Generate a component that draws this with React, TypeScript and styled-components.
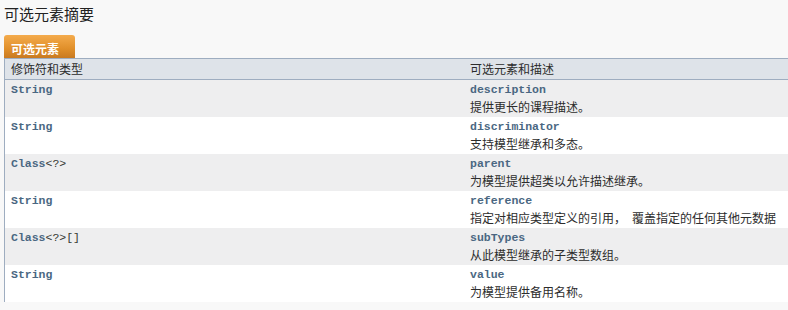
import { Fragment } from "react";
import styled, { createGlobalStyle } from "styled-components";

const GlobalStyle = createGlobalStyle`
  html, body {
    margin: 0;
    padding: 0;
    background: #f8f8f8;
  }
  body {
    font-family: "Noto Sans CJK SC", "DejaVu Sans", sans-serif;
    color: #353833;
    overflow: hidden;
  }
`;

const Page = styled.div`
  width: 788px;
  height: 310px;
  padding: 0 0 0 4px;
  box-sizing: border-box;
`;

const Title = styled.h3`
  margin: 0;
  height: 35px;
  padding-top: 3px;
  box-sizing: border-box;
  font-size: 15px;
  font-weight: normal;
  line-height: 21px;
  color: #222222;
`;

const Tab = styled.div`
  width: 71px;
  height: 23px;
  box-sizing: border-box;
  padding: 5px 0 0 7px;
  border-radius: 3px 3px 0 0;
  background: linear-gradient(#f4ab4c, #e08f2a 60%, #c97a21);
  color: #ffffff;
  font-size: 12px;
  font-weight: bold;
  line-height: 18px;
`;

const Table = styled.div`
  display: grid;
  grid-template-columns: 459px 1fr;
  border-left: 1px solid #9eadc0;
  border-top: 1px solid #9eadc0;
`;

const HeadCell = styled.div`
  height: 20px;
  background: #dee3e9;
  border-bottom: 1px solid #9eadc0;
  padding-left: 6px;
  font-size: 12px;
  line-height: 19px;
  color: #2c2c2c;
`;

const Cell = styled.div<{ $alt: boolean }>`
  height: 37px;
  box-sizing: border-box;
  padding: 1px 0 0 6px;
  background: ${(p) => (p.$alt ? "#eeeeef" : "#ffffff")};
`;

const Code = styled.div`
  font-family: "Liberation Mono", "DejaVu Sans Mono", monospace;
  font-size: 11.5px;
  font-weight: bold;
  line-height: 17px;
  color: #4a6782;
`;

const Plain = styled.span`
  font-weight: normal;
  color: #353833;
`;

const Desc = styled.div`
  font-size: 12px;
  line-height: 18px;
  white-space: nowrap;
  color: #2c2c2c;
`;

// the comma in the source is followed by a half-width gap
const Punct = styled.span`
  display: inline-block;
  width: 1.5em;
`;

const rows = [
  { type: "String", name: "description", desc: ["提供更长的课程描述。"] },
  { type: "String", name: "discriminator", desc: ["支持模型继承和多态。"] },
  { type: "Class", rest: "<?>", name: "parent", desc: ["为模型提供超类以允许描述继承。"] },
  {
    type: "String",
    name: "reference",
    desc: ["指定对相应类型定义的引用", "覆盖指定的任何其他元数据"],
  },
  { type: "Class", rest: "<?>[]", name: "subTypes", desc: ["从此模型继承的子类型数组。"] },
  { type: "String", name: "value", desc: ["为模型提供备用名称。"] },
];

export default function App() {
  return (
    <Page>
      <GlobalStyle />
      <Title>可选元素摘要</Title>
      <Tab>可选元素</Tab>
      <Table>
        <HeadCell>修饰符和类型</HeadCell>
        <HeadCell>可选元素和描述</HeadCell>
        {rows.map((r, i) => (
          <Fragment key={r.name}>
            <Cell $alt={i % 2 === 0}>
              <Code>
                {r.type}
                {r.rest && <Plain>{r.rest}</Plain>}
              </Code>
            </Cell>
            <Cell $alt={i % 2 === 0}>
              <Code>{r.name}</Code>
              <Desc>
                {r.desc.map((part, j) => (
                  <Fragment key={j}>
                    {j > 0 && <Punct>，</Punct>}
                    {part}
                  </Fragment>
                ))}
              </Desc>
            </Cell>
          </Fragment>
        ))}
      </Table>
    </Page>
  );
}
